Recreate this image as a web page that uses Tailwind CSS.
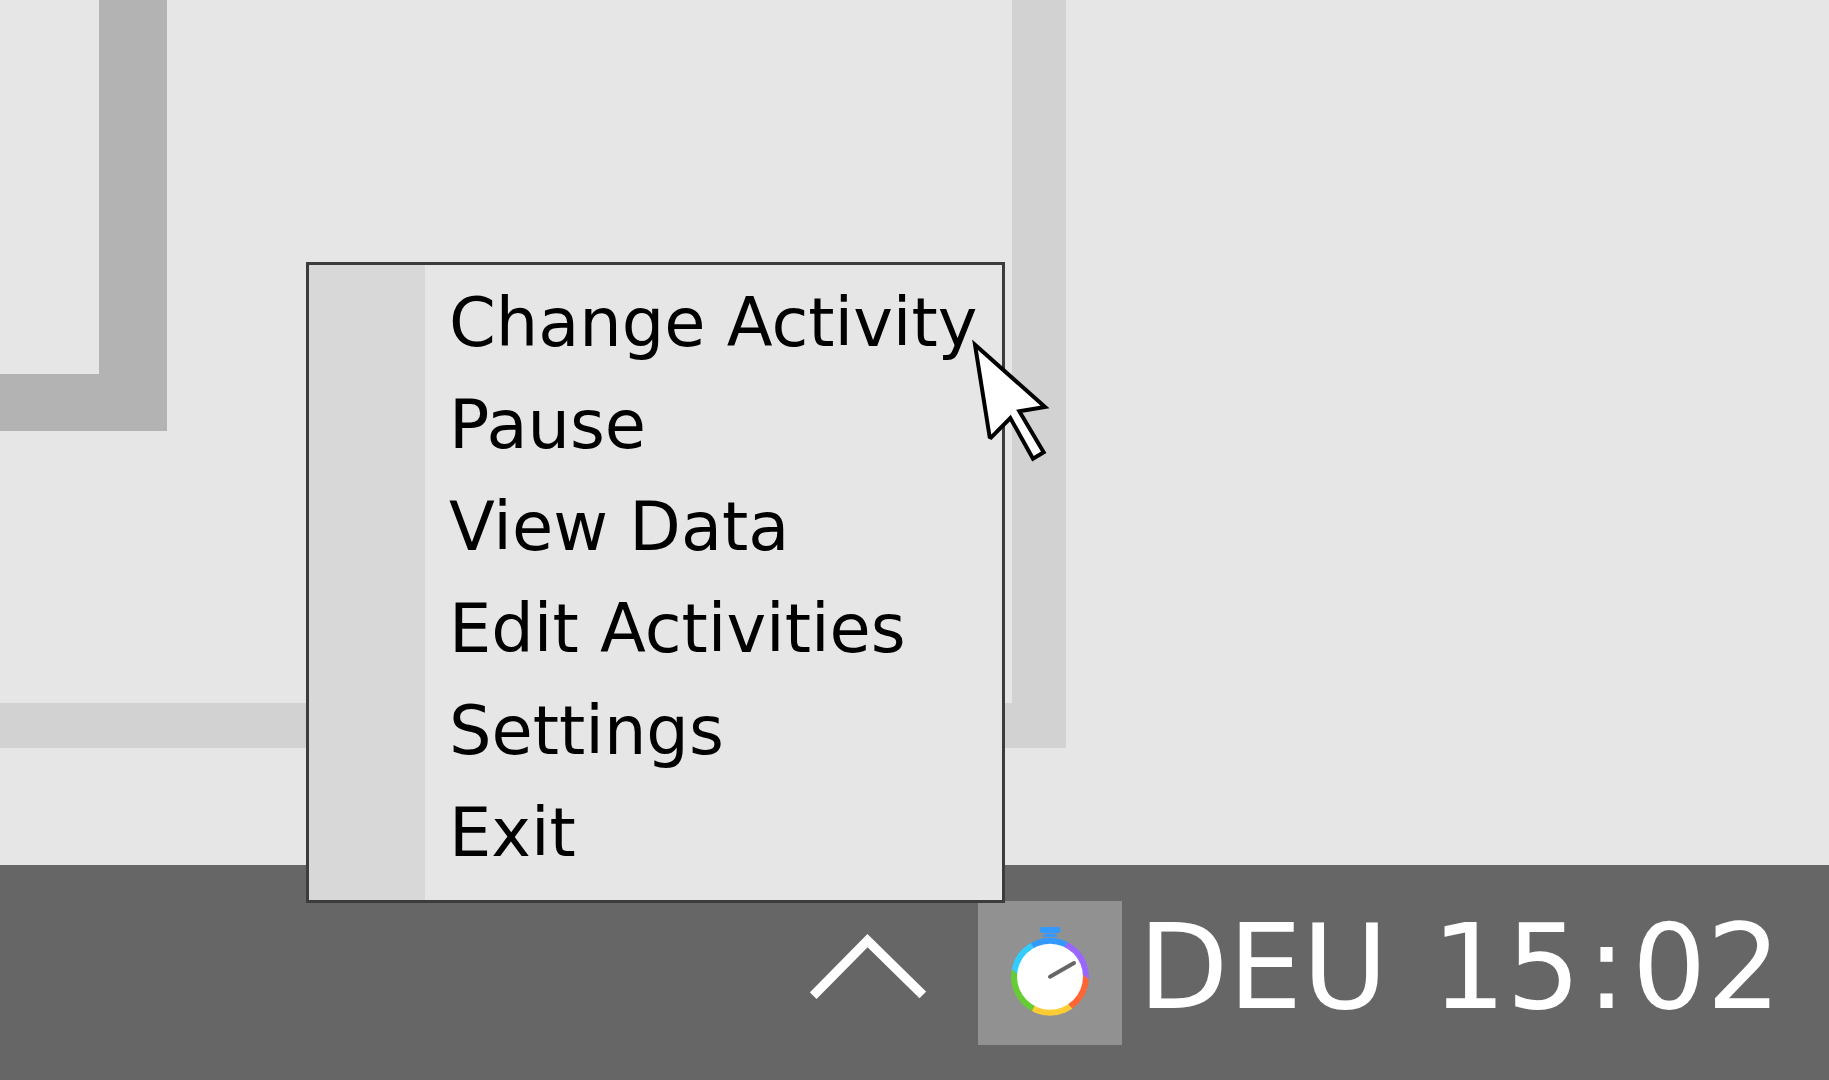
<!DOCTYPE html>
<html lang="en">
<head>
<meta charset="utf-8">
<title>Tray menu</title>
<script src="https://cdn.jsdelivr.net/npm/@tailwindcss/browser@4"></script>
</head>
<body class="relative flex min-h-screen flex-col overflow-hidden bg-[#e6e6e6] font-['DejaVu_Sans',Verdana,sans-serif]">

  <!-- Desktop with two window outlines -->
  <main class="relative grow overflow-hidden">
    <div class="absolute top-0 left-0 h-[748px] w-[1066px] border-r-[54px] border-b-[45px] border-[#d2d2d2]"></div>
    <div class="absolute top-0 left-0 h-[431px] w-[167px] border-r-[68px] border-b-[57px] border-[#b3b3b3] bg-[#e6e6e6]"></div>
  </main>

  <!-- Taskbar -->
  <footer class="flex h-[215px] items-center justify-end bg-[#666666] pr-12 text-white">
    <button type="button" aria-label="Show hidden icons" class="mr-[52px]">
      <svg class="block h-[77px] w-[116px]" viewBox="810 934 116 77" fill="none" stroke="#fff" stroke-width="9.4">
        <path d="M813.2 995.6 867.5 940.7 922.8 995"/>
      </svg>
    </button>
    <button type="button" aria-label="Time tracker" class="mr-4 bg-[#919191]">
      <svg class="block size-36" viewBox="56 33 432 432">
        <defs><clipPath id="ring"><circle cx="272" cy="260" r="117"/></clipPath></defs>
        <rect x="242" y="111" width="61" height="18" rx="5" fill="#3399ff"/>
        <path d="M250 141Q252 131 262 131H282Q292 131 294 141Z" fill="#3399ff"/>
        <g clip-path="url(#ring)">
          <path d="M272 260 222 172 206 140H335L316 171Z" fill="#3399ff"/>
          <path d="M272 260 316 171 335 140H400V279L372 254Z" fill="#9966ff"/>
          <path d="M272 260 372 254 400 279V390H372L328 344Z" fill="#ff6633"/>
          <path d="M272 260 328 344 372 390H204L226 346Z" fill="#ffcc33"/>
          <path d="M272 260 226 346 204 390H140V225L175 252Z" fill="#66cc33"/>
          <path d="M272 260 175 252 140 225V140H204L222 172Z" fill="#33ccff"/>
        </g>
        <circle cx="272" cy="260" r="99" fill="#fff"/>
        <path d="M272 260 344 219" stroke="#666" stroke-width="12" stroke-linecap="round"/>
      </svg>
    </button>
    <div class="flex gap-11 pb-[10px] text-[117px] leading-none whitespace-nowrap">
      <span>DEU</span>
      <time datetime="15:02">15<span class="px-1.5">:</span>02</time>
    </div>
  </footer>

  <!-- Tray context menu -->
  <nav aria-label="Tray menu" class="absolute top-[262px] left-[306px] flex w-[699px] border-[3px] border-[#3c3c3c] bg-[#e6e6e6] text-[67px] leading-[102px] text-black">
    <div class="w-[116px] shrink-0 bg-[#d8d8d8]"></div>
    <ul class="grow pt-[7px] pb-4 pl-6 whitespace-nowrap">
      <li><button type="button" class="block">Change Activity</button></li>
      <li><button type="button" class="block">Pause</button></li>
      <li><button type="button" class="block">View Data</button></li>
      <li><button type="button" class="block">Edit Activities</button></li>
      <li><button type="button" class="block">Settings</button></li>
      <li><button type="button" class="block">Exit</button></li>
    </ul>
  </nav>

  <!-- Mouse pointer -->
  <svg class="pointer-events-none absolute top-[320px] left-[950px] h-40 w-[130px]" viewBox="0 0 390 480" fill="#fff" stroke="#000" stroke-width="12" aria-hidden="true">
    <path d="M75 74 285 261 208 274 281 397 249 416 181 294 123 353 119 351Z"/>
  </svg>
</body>
</html>
